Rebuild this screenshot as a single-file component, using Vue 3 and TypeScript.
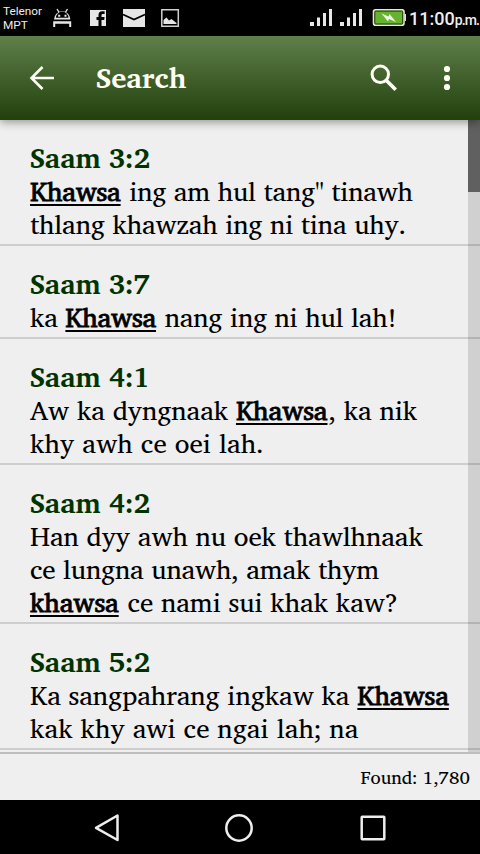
<script setup lang="ts">
interface Part { text: string; hit?: boolean }
interface Line { parts: Part[]; tracking: number }
interface Verse { reference: string; lines: Line[] }

const verses: Verse[] = [
  {
    reference: 'Saam 3:2',
    lines: [
      { tracking: -0.25, parts: [{ text: 'Khawsa', hit: true }, { text: ' ing am hul tang" tinawh' }] },
      { tracking: -0.2, parts: [{ text: 'thlang khawzah ing ni tina uhy.' }] },
    ],
  },
  {
    reference: 'Saam 3:7',
    lines: [
      { tracking: -0.24, parts: [{ text: 'ka ' }, { text: 'Khawsa', hit: true }, { text: ' nang ing ni hul lah!' }] },
    ],
  },
  {
    reference: 'Saam 4:1',
    lines: [
      { tracking: -0.1, parts: [{ text: 'Aw ka dyngnaak ' }, { text: 'Khawsa', hit: true }, { text: ', ka nik' }] },
      { tracking: 0.05, parts: [{ text: 'khy awh ce oei lah.' }] },
    ],
  },
  {
    reference: 'Saam 4:2',
    lines: [
      { tracking: -0.12, parts: [{ text: 'Han dyy awh nu oek thawlhnaak' }] },
      { tracking: -0.22, parts: [{ text: 'ce lungna unawh, amak thym' }] },
      { tracking: -0.1, parts: [{ text: 'khawsa', hit: true }, { text: ' ce nami sui khak kaw?' }] },
    ],
  },
  {
    reference: 'Saam 5:2',
    lines: [
      { tracking: -0.1, parts: [{ text: 'Ka sangpahrang ingkaw ka ' }, { text: 'Khawsa', hit: true }] },
      { tracking: 0, parts: [{ text: 'kak khy awi ce ngai lah; na' }] },
    ],
  },
]
</script>

<template>
  <div class="screen">
    <header class="status">
      <div class="carrier"><span>Telenor</span><span>MPT</span></div>
      <svg class="notices" width="130" height="36" viewBox="50 0 130 36">
        <g fill="#e6e6e6">
          <path d="M54 19.500a8.200 8.200 0 0 1 16.400 0z" />
          <path d="M57 9l2.500 4M67.500 9l-2.500 4" stroke="#e6e6e6" stroke-width="1.400" />
          <path d="M53.200 21.200h18V27h-2v-3.300h-14V27h-2z" />
          <path d="M90 10h16v16h-4.500v-6h2.700l.4-3h-3.100v-1.500c0-1 .4-1.500 1.500-1.500h1.600v-2.700h-2.300c-2.700 0-3.800 1.500-3.800 3.700v2h-2v3h2v6H90z" />
          <path d="M123 9h22v18h-22z" />
          <path d="M163.500 24v-4l3-2.500 2.500 3 2.500-1.500 5 4v1z" />
        </g>
        <path d="M56 17.800a6.200 6.200 0 0 1 12.400 0z" fill="#000" />
        <path d="M58.200 15.700h2M64.500 15.700h2" stroke="#eee" stroke-width="2" />
        <path d="M123 14.500l11 5 11-5" fill="none" stroke="#000" stroke-width="1.800" />
        <path d="M161.800 9.800h16.500v16.500h-16.500z" fill="none" stroke="#d0d0d0" stroke-width="1.500" />
      </svg>
      <svg class="signals" width="98" height="36" viewBox="309 0 98 36">
        <g fill="#e8e8e8">
          <path d="M310 22h4v4h-4zM317 17.500h3V26h-3zM323 13h3v13h-3zM329 9h3v17h-3z" />
          <path d="M340 22h4v4h-4zM347 17.500h3V26h-3zM353 13h3v13h-3zM359 9h3v17h-3z" />
        </g>
        <rect x="373.500" y="9.800" width="30.500" height="15.500" rx="2" fill="#65b32e" stroke="#e4e8df" stroke-width="1.600" />
        <rect x="374.800" y="11.100" width="27.900" height="12.900" rx="1" fill="none" stroke="#24380f" />
        <path d="M404.500 14h1.500v7h-1.500z" fill="#ddd" />
        <path d="M381.500 13.500l7 3 1-2.500 6.500 8-7-3-1 2.500z" fill="#eef5e6" />
      </svg>
      <div class="clock">11:00<small>p.m.</small></div>
    </header>

    <nav class="toolbar">
      <svg class="back" width="26" height="26" viewBox="0 0 26 26">
        <path d="M25 13H3M13.500 2L2.500 13l11 11" fill="none" stroke="#fffff5" stroke-width="2.600" />
      </svg>
      <h1>Search</h1>
      <svg width="28" height="28" viewBox="0 0 28 28">
        <circle cx="10.300" cy="10.300" r="8.200" fill="none" stroke="#fffff5" stroke-width="3" />
        <path d="M16 16l9.700 9.700" stroke="#fffff5" stroke-width="3.600" />
      </svg>
      <svg class="more" width="8" height="26" viewBox="0 0 8 26">
        <g fill="#fffff5"><circle cx="4" cy="4" r="3.100" /><circle cx="4" cy="13" r="3.100" /><circle cx="4" cy="22" r="3.100" /></g>
      </svg>
    </nav>

    <main class="results">
      <article v-for="verse in verses" :key="verse.reference">
        <h2>{{ verse.reference }}</h2>
        <p v-for="(line, i) in verse.lines" :key="i" :style="{ letterSpacing: line.tracking + 'px' }"><span v-for="(part, j) in line.parts" :key="j" :class="{ hit: part.hit }">{{ part.text }}</span></p>
      </article>
      <div class="scrollbar"><div class="thumb"></div></div>
    </main>

    <footer class="found">Found: 1,780</footer>

    <div class="keys">
      <svg width="28" height="30" viewBox="0 0 28 30"><path d="M24.500 2.500v24.500L3 14.800z" fill="none" stroke="#eee" stroke-width="2.500" stroke-linejoin="round" /></svg>
      <svg width="30" height="30" viewBox="0 0 30 30"><circle cx="15" cy="15" r="12.700" fill="none" stroke="#eee" stroke-width="2.500" /></svg>
      <svg width="26" height="26" viewBox="0 0 26 26"><rect x="1.700" y="1.700" width="22.600" height="22.600" rx=".5" fill="none" stroke="#eee" stroke-width="2.500" /></svg>
    </div>
  </div>
</template>

<style>
body { margin: 0; background: #000; }
</style>

<style scoped>
.screen { width: 480px; height: 854px; display: flex; flex-direction: column; overflow: hidden; background: #efefef; font-family: "Charis SIL", "Noto Serif", "Liberation Serif", serif; color: #000; }
.status { flex: none; height: 36px; display: flex; align-items: center; background: #000; color: #eee; font-family: Roboto, sans-serif; }
.carrier { width: 47px; padding-left: 3px; display: flex; flex-direction: column; font-size: 11.8px; line-height: 14px; }
.signals { margin-left: 129px; flex: none; }
.notices { flex: none; }
.clock { display: flex; align-items: baseline; padding: 2px 0 0 2px; font-size: 18px; font-weight: 500; line-height: 34px; white-space: nowrap; }
.clock small { font-size: 14px; letter-spacing: -.9px; }
.toolbar { flex: none; height: 84px; box-sizing: border-box; position: relative; z-index: 1; display: flex; align-items: center; padding: 0 29px; background: linear-gradient(#5f7f4b, #21400c); box-shadow: 0 2px 9px rgba(0, 0, 0, .4); color: #fffff5; }
h1 { flex: 1; margin: 0 0 0 41px; font-size: 28.5px; line-height: 40px; font-weight: 700; }
.more { margin-left: 45px; }
.results { flex: none; height: 632px; position: relative; overflow: hidden; }
article { padding: 21px 0 3px 30px; border-bottom: 2px solid #cecece; }
h2, p { margin: 0; height: 33px; line-height: 33px; white-space: pre; }
h2 { height: 34px; font-size: 28px; font-weight: 700; color: #003300; letter-spacing: -.15px; }
p { font-size: 27px; }
.hit { margin-right: 1px; -webkit-text-stroke: .8px #000; text-decoration: underline; text-decoration-thickness: 2px; text-underline-offset: 3px; text-decoration-skip-ink: none; }
.scrollbar { position: absolute; top: 0; right: 0; width: 12px; height: 100%; background: rgba(0, 0, 0, .13); }
.thumb { height: 72px; background: #606060; }
.found { flex: none; height: 48px; box-sizing: border-box; border-top: 2px solid #bebebe; padding-right: 10px; text-align: right; font-size: 18.6px; line-height: 46px; }
.keys { flex: 1; display: flex; align-items: center; padding: 1px 0 0 93px; background: #000; }
.keys svg + svg { margin-left: 103px; }
.keys svg + svg + svg { margin-left: 106px; }
</style>
